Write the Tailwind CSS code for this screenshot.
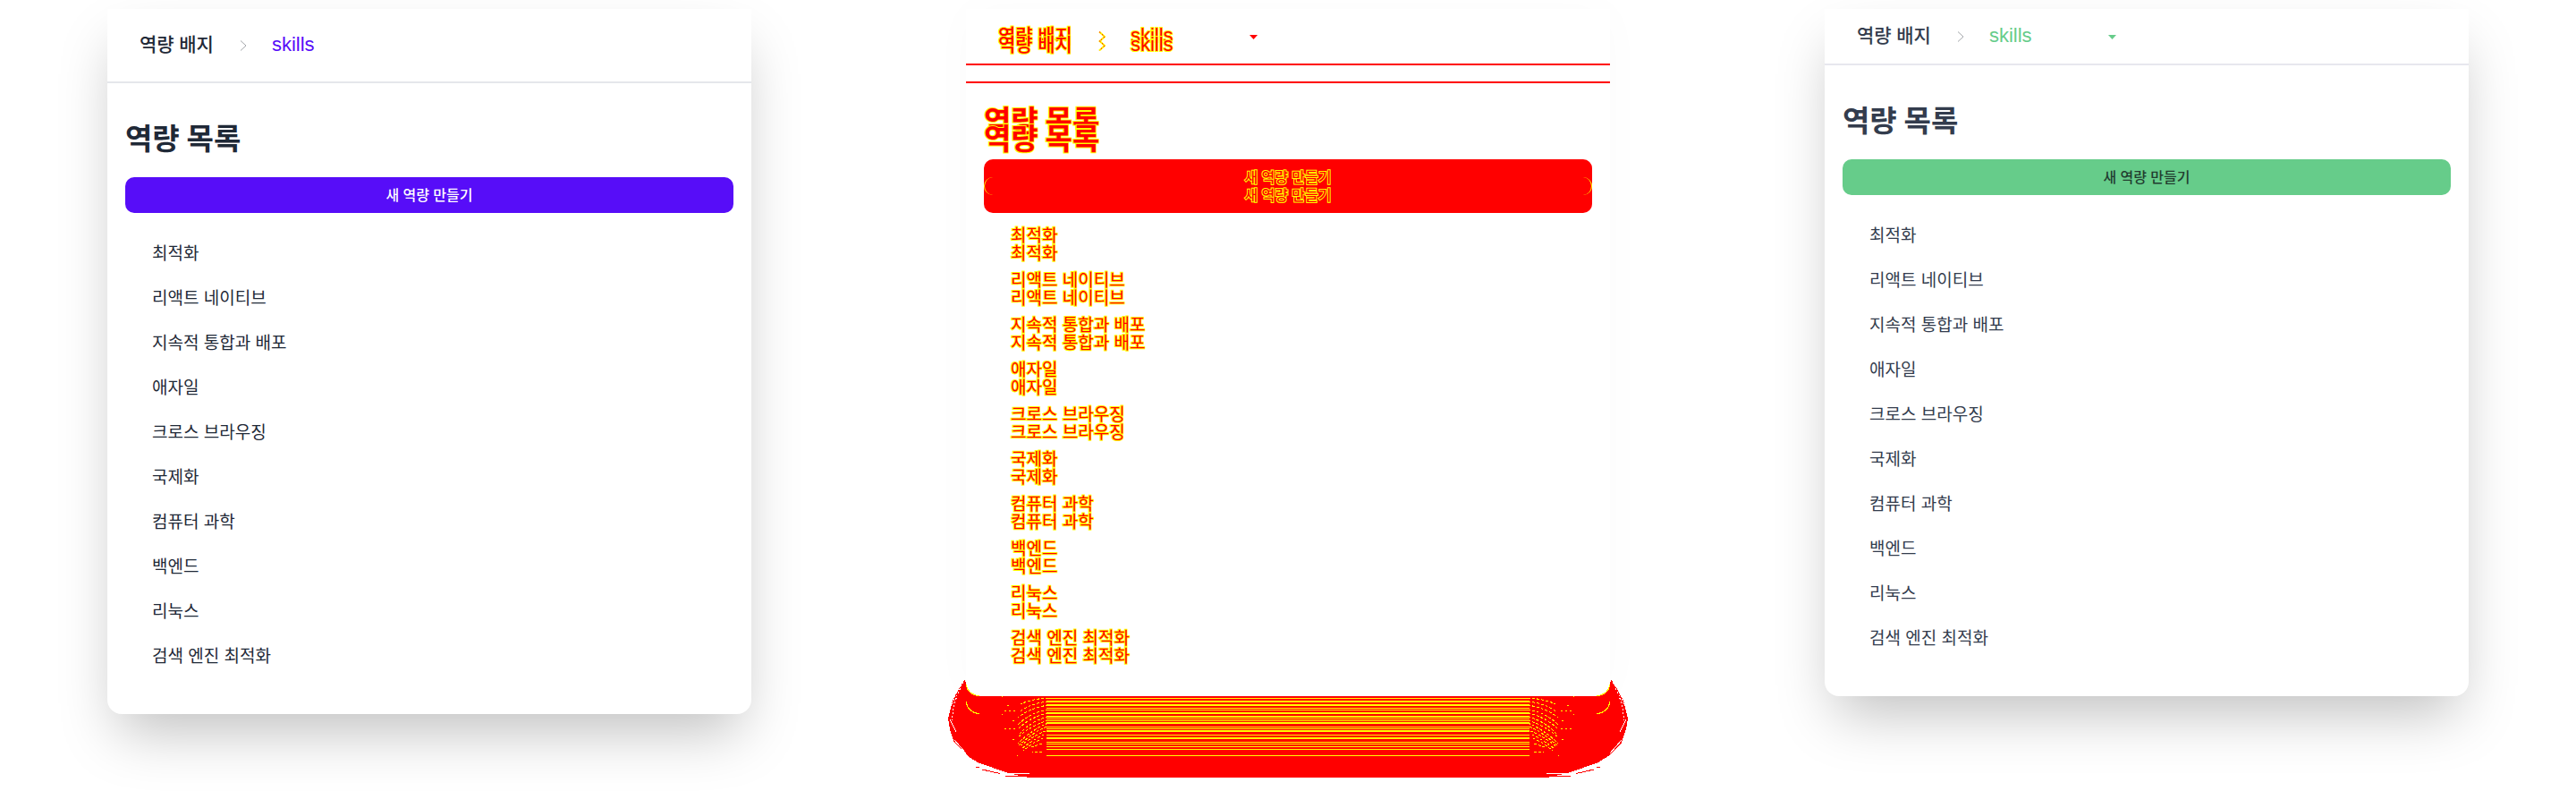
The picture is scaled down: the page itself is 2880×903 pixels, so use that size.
<!DOCTYPE html>
<html lang="ko">
<head>
<meta charset="utf-8">
<title>역량 목록</title>
<script src="https://cdn.jsdelivr.net/npm/@tailwindcss/browser@4"></script>
</head>
<body class="bg-white font-['Inter','Noto_Sans_CJK_KR',sans-serif] text-[19px]">
<main class="grid grid-cols-3 items-start overflow-hidden pb-[105px]">

  <!-- Before -->
  <div class="px-[12.5%] pt-[10px]">
    <section class="rounded-b-[16px] bg-white text-[#1f2937] shadow-[0_31px_64px_-12px_rgba(0,0,0,0.25)]">
      <nav class="flex h-[83px] items-start border-b-2 border-[#e5e7eb] px-9 pt-6 text-[21px] leading-8">
        <a href="#" class="font-medium">역량 배지</a>
        <svg class="mt-[11px] mr-[26px] ml-[27px] h-3 w-3 fill-none stroke-[#a3a6aa]" viewBox="0 0 12 12"><path d="M3 0.5l6 5.5l-6 5.5"/></svg>
        <a href="#" class="font-['Liberation_Sans',sans-serif] text-[22px] text-[#570df8]">skills</a>
      </nav>
      <div class="px-5 pt-10 pb-[39px]">
        <h1 class="text-[33px] leading-[45px] font-bold">역량 목록</h1>
        <button class="mt-5 block h-10 w-full rounded-[10px] bg-[#570df8] text-[16px] font-medium text-white">새 역량 만들기</button>
        <ul class="pt-[21px] pl-[30px] leading-[50px]">
          <li>최적화</li><li>리액트 네이티브</li><li>지속적 통합과 배포</li><li>애자일</li><li>크로스 브라우징</li><li>국제화</li><li>컴퓨터 과학</li><li>백엔드</li><li>리눅스</li><li>검색 엔진 최적화</li>
        </ul>
      </div>
    </section>
  </div>

  <!-- Difference: both layouts laid over each other -->
  <div class="px-[12.5%] pt-[10px]">
    <section class="relative text-[#ff0000] shadow-[0_0_50px_rgba(0,0,0,0.02)] [-webkit-text-stroke:2px_#ffff00] [paint-order:stroke_fill]">
      <div>
        <nav class="flex h-[63px] items-start border-b-2 border-[#ff0000] px-9 pt-[14px] text-[21px] leading-8">
          <a href="#" class="font-medium">역량 배지</a>
          <svg class="mt-[11px] mr-[26px] ml-[27px] h-3 w-3 fill-none" viewBox="0 0 12 12"><path stroke="#ff0" stroke-width="2" d="M3 0.5l6 5.5l-6 5.5"/><path stroke="#f00" stroke-dasharray="2 2" d="M3 0.5l6 5.5l-6 5.5"/></svg>
          <label class="flex items-start">
            <select aria-label="skills" class="w-[133px] appearance-none font-['Liberation_Sans',sans-serif] text-[22px] [-webkit-text-stroke:2px_#ffff00] [paint-order:stroke_fill]"><option>skills</option></select>
            <svg class="mt-[15px] h-[5px] w-[9px] fill-current" viewBox="0 0 9 5"><path d="M0 0h9L4.5 5z"/></svg>
          </label>
        </nav>
        <div class="px-5 pt-10 pb-[39px]">
          <h1 class="text-[33px] leading-[45px] font-bold">역량 목록</h1>
          <div class="relative mt-5 -mb-5 rounded-[10px] bg-[#ff0000] pb-5">
            <button class="block h-10 w-full text-[16px] font-medium">새 역량 만들기</button>
            <div class="absolute inset-x-0 top-5 h-5 rounded-[10px] border-x border-[#ffff00]"></div>
          </div>
          <ul class="pt-[21px] pl-[30px] leading-[50px]">
            <li>최적화</li><li>리액트 네이티브</li><li>지속적 통합과 배포</li><li>애자일</li><li>크로스 브라우징</li><li>국제화</li><li>컴퓨터 과학</li><li>백엔드</li><li>리눅스</li><li>검색 엔진 최적화</li>
          </ul>
        </div>
      </div>

      <div class="absolute inset-x-0 top-0">
        <nav class="flex h-[83px] items-start border-b-2 border-[#ff0000] px-9 pt-6 text-[21px] leading-8">
          <a href="#" class="font-medium">역량 배지</a>
          <svg class="mt-[11px] mr-[26px] ml-[27px] h-3 w-3 fill-none" viewBox="0 0 12 12"><path stroke="#ff0" stroke-width="2" d="M3 0.5l6 5.5l-6 5.5"/><path stroke="#f00" stroke-dasharray="2 2" d="M3 0.5l6 5.5l-6 5.5"/></svg>
          <a href="#" class="font-['Liberation_Sans',sans-serif] text-[22px]">skills</a>
        </nav>
        <div class="px-5 pt-10">
          <h1 class="text-[33px] leading-[45px] font-bold">역량 목록</h1>
          <button class="mt-5 block h-10 w-full text-[16px] font-medium">새 역량 만들기</button>
          <ul class="pt-[21px] pl-[30px] leading-[50px]">
            <li>최적화</li><li>리액트 네이티브</li><li>지속적 통합과 배포</li><li>애자일</li><li>크로스 브라우징</li><li>국제화</li><li>컴퓨터 과학</li><li>백엔드</li><li>리눅스</li><li>검색 엔진 최적화</li>
          </ul>
        </div>
      </div>

      <!-- Shadow difference under the card: two mirrored caps and a stretching middle -->
      <div class="absolute -inset-x-[22px] -bottom-[95px] flex h-[118px]">
        <svg class="h-[118px] w-[152px] shrink-0" viewBox="0 0 152 118" shape-rendering="crispEdges">
          <defs>
            <g id="cap" fill="none">
              <path fill="#f00" d="M21 4L14 15L7 28L2 48L4 60L9 75L24 90L35 97L52 103L69 109L92 114H153V23H37Q24 22 22 10Z"/>
              <path stroke="#fff" stroke-dasharray="2 2" d="M19 7L12 22L8 36L6 50M17 8L10 22L6 34"/>
              <path stroke="#fff" d="M4 49L11 63M9 72L22 87M35 102L47 103M69 109.5H93M48 105L68 110"/>
              <path stroke="#f00" d="M33 102.5H37M40 105L60 109.5M66 112.5H92"/>
              <path stroke="#ff0" d="M22 10Q24 21 37 23M22 29Q24 41 37 43M62 23.5h1M62 43.5h1"/>
              <path stroke="#ff0" stroke-dasharray="2 3" d="M65 39.5H80M65 59.5H80M68 33.5h2M74 50.5h2M74 71.5h2"/>
              <path stroke="#ff0" stroke-dasharray="3 2" d="M114 25Q95 26 83 32M114 29Q94 31 81 41M114 33Q94 36 80 47M114 38Q94 41 80 55M114 42Q94 46 80 60M114 46Q94 51 81 66M114 50Q94 56 79 70M114 53Q96 60 80 76M112 57Q96 64 79 80M111 62Q98 67 82 79M109 66Q98 71 84 82M108 70Q98 74 86 84M107 76L95 80M107 85.5H96M79 89.5h1"/>
            </g>
            <g id="bands" fill="#ff0">
              <path d="M0 25h40v1h-40zM0 28h40v2h-40zM0 32h40v2h-40zM0 36h40v1h-40zM0 38h40v1h-40zM0 41h40v2h-40zM0 45h40v2h-40zM0 48h40v1h-40zM0 50h40v1h-40zM0 52h40v2h-40zM0 57h40v1h-40zM0 59h40v1h-40zM0 61h40v2h-40zM0 66h40v1h-40zM0 69h40v2h-40zM0 74h40v1h-40zM0 76h40v1h-40zM0 79h40v1h-40zM0 82h40v1h-40zM0 89h40v1h-40z"/>
            </g>
          </defs>
          <use href="#cap"/><use href="#bands" x="112"/>
        </svg>
        <svg class="h-[118px] min-w-0 flex-1" viewBox="0 0 40 118" preserveAspectRatio="none" shape-rendering="crispEdges">
          <path fill="#f00" d="M0 23h40v91h-40z"/><use href="#bands"/>
        </svg>
        <svg class="h-[118px] w-[152px] shrink-0 -scale-x-100" viewBox="0 0 152 118" shape-rendering="crispEdges">
          <use href="#cap"/><use href="#bands" x="112"/>
        </svg>
      </div>
    </section>
  </div>

  <!-- After -->
  <div class="px-[12.5%] pt-[10px]">
    <section class="rounded-b-[16px] bg-white text-[#333c4d] shadow-[0_31px_64px_-12px_rgba(0,0,0,0.25)]">
      <nav class="flex h-[63px] items-start border-b-2 border-[#e7e7ee] px-9 pt-[14px] text-[21px] leading-8">
        <a href="#" class="font-medium">역량 배지</a>
        <svg class="mt-[11px] mr-[26px] ml-[27px] h-3 w-3 fill-none stroke-[#a3a6aa]" viewBox="0 0 12 12"><path d="M3 0.5l6 5.5l-6 5.5"/></svg>
        <label class="flex items-start text-[#66cc8a]">
          <select aria-label="skills" class="w-[133px] appearance-none font-['Liberation_Sans',sans-serif] text-[22px]"><option>skills</option></select>
          <svg class="mt-[15px] h-[5px] w-[9px] fill-current" viewBox="0 0 9 5"><path d="M0 0h9L4.5 5z"/></svg>
        </label>
      </nav>
      <div class="px-5 pt-10 pb-[39px]">
        <h1 class="text-[33px] leading-[45px] font-bold">역량 목록</h1>
        <button class="mt-5 block h-10 w-full rounded-[10px] bg-[#66cc8a] text-[16px] font-medium text-[#223d30]">새 역량 만들기</button>
        <ul class="pt-[21px] pl-[30px] leading-[50px]">
          <li>최적화</li><li>리액트 네이티브</li><li>지속적 통합과 배포</li><li>애자일</li><li>크로스 브라우징</li><li>국제화</li><li>컴퓨터 과학</li><li>백엔드</li><li>리눅스</li><li>검색 엔진 최적화</li>
        </ul>
      </div>
    </section>
  </div>
</main>
</body>
</html>
